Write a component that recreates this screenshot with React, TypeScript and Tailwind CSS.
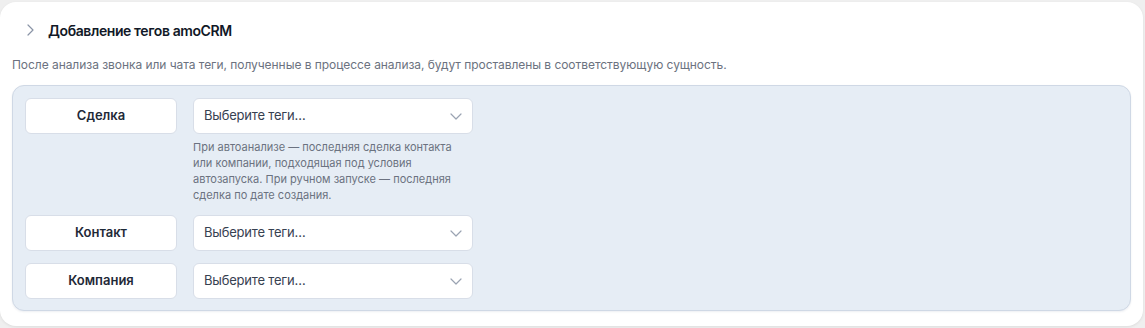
// Карточка настроек: добавление тегов amoCRM по сущностям

const rows = [
  {
    label: "Сделка",
    hint: "При автоанализе — последняя сделка контакта или компании, подходящая под условия автозапуска. При ручном запуске — последняя сделка по дате создания.",
  },
  { label: "Контакт" },
  { label: "Компания" },
];

function Chevron({ className }: { className?: string }) {
  return (
    <svg viewBox="0 0 16 16" className={className} fill="none" stroke="currentColor" strokeWidth="1.2" strokeLinecap="round" strokeLinejoin="round">
      <path d="M3 6l5 5 5-5" />
    </svg>
  );
}

export default function App() {
  return (
    <div className="w-[1145px] h-[328px] bg-[#efefef] pt-[2px] pr-[2px] font-['Inter','Noto_Sans',sans-serif]">
      <div className="h-[324px] bg-white rounded-[16px] shadow-[0_1px_3px_rgba(0,0,0,0.08)] px-3">
        {/* заголовок */}
        <div className="flex items-center h-[56px] pl-[10px]">
          <Chevron className="w-[16px] h-[16px] text-[#8a94a6] -rotate-90" />
          <span className="ml-[10px] text-[14px] font-semibold text-[#111827] tracking-[-0.4px]">
            Добавление тегов amoCRM
          </span>
        </div>

        <p className="text-[12px] leading-[14px] text-[#6b7280] tracking-[-0.05px]">
          После анализа звонка или чата теги, полученные в процессе анализа, будут проставлены в соответствующую сущность.
        </p>

        {/* панель с сущностями */}
        <div className="mt-[13px] bg-[#e6edf5] border border-[#cfd8e5] rounded-[12px] shadow-[0_1px_2px_rgba(30,50,90,0.08)] pt-3 pl-3 pb-[11px] flex flex-col gap-3">
          {rows.map((row) => (
            <div key={row.label} className="grid grid-cols-[152px_280px] gap-x-4">
              <div className="h-[36px] bg-white border border-[#d8dee8] rounded-[6px] flex items-center justify-center text-[13px] font-semibold text-[#1f2937]">
                {row.label}
              </div>
              <div className="h-[36px] bg-white border border-[#d8dee8] rounded-[6px] flex items-center justify-between pl-[10px] pr-[8px] text-[13px] text-[#374151] tracking-[-0.2px]">
                <span>Выберите теги…</span>
                <Chevron className="w-[16px] h-[16px] text-[#9aa3b2]" />
              </div>
              {row.hint && (
                <p className="col-start-2 mt-[5px] w-[264px] text-[11px] leading-[16px] text-[#6b7280]">
                  {row.hint}
                </p>
              )}
            </div>
          ))}
        </div>
      </div>
    </div>
  );
}
